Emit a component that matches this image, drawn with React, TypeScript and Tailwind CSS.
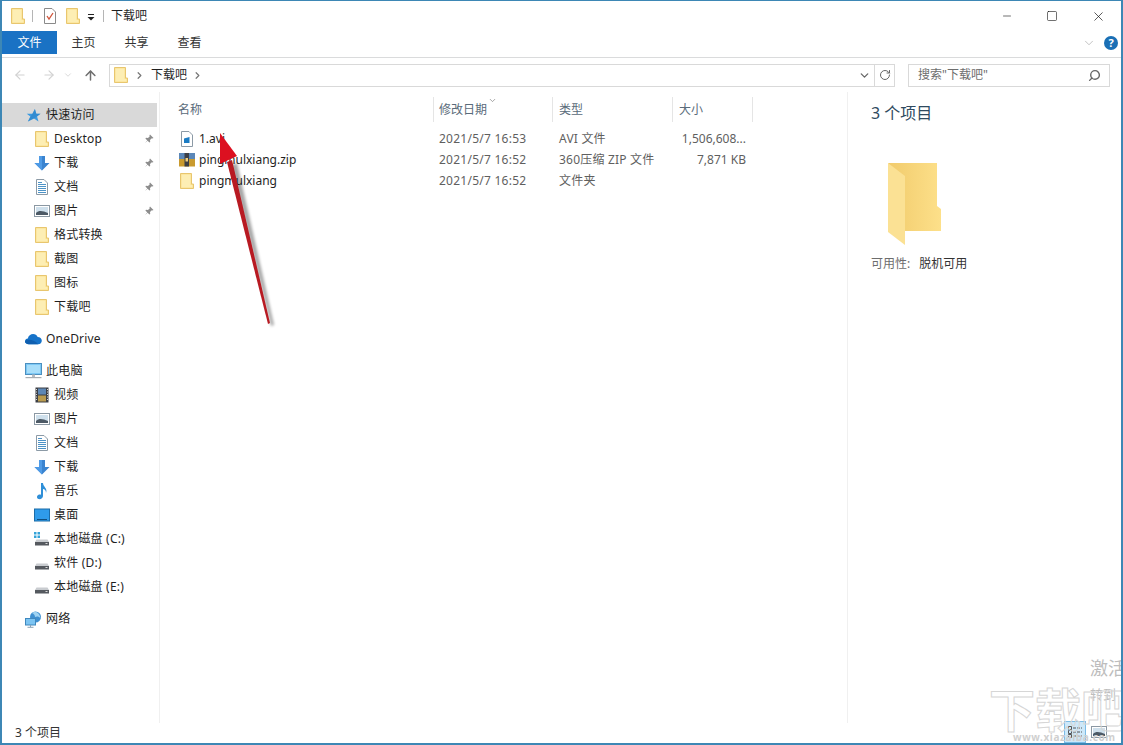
import { ReactNode } from 'react'
import { ArrowLeft, ArrowRight, ArrowUp, ChevronDown, ChevronRight, Minus, RotateCw, Search, Square, X } from 'lucide-react'

const Folder = ({ className = 'w-[14px] h-[16px]' }: { className?: string }) => (
  <svg viewBox="0 0 14 16" className={className}>
    <path d="M0.5 0.5H11.5V11H13.5V15.5H0.5Z" fill="#fbe08e" stroke="#e8c66f" strokeWidth="1" />
    <path d="M1.5 1.5H10.5V12H12.5V14.5H1.5Z" fill="#fdeeb4" />
  </svg>
)

const BlueDown = () => (
  <svg viewBox="0 0 16 16" className="w-4 h-4">
    <path d="M5 1H11V8H15.5L8 15.5L0.5 8H5Z" fill="#3b84d0" />
    <path d="M5 1H8V15.5L0.5 8H5Z" fill="#4f9be6" />
  </svg>
)

const Doc = () => (
  <svg viewBox="0 0 14 16" className="w-[14px] h-4">
    <path d="M1.5 0.5H9L12.5 4V15.5H1.5Z" fill="#fff" stroke="#8c9aa6" />
    <path d="M3 3.5H7M3 5.5H11M3 7.5H11M3 9.5H11M3 11.5H11M3 13.5H11" stroke="#4d93c7" />
  </svg>
)

const Pic = () => (
  <svg viewBox="0 0 16 14" className="w-4 h-[14px]">
    <rect x="0.5" y="1.5" width="15" height="11" fill="#fff" stroke="#8b98a3" />
    <rect x="2" y="3" width="12" height="8" fill="#cfe0ec" />
    <path d="M2 9C5 6 9 7 14 9V11H2Z" fill="#4d5a66" />
  </svg>
)

const Video = () => (
  <svg viewBox="0 0 14 16" className="w-[14px] h-4">
    <rect x="0.5" y="0.5" width="13" height="15" fill="#3c3f45" />
    <rect x="3" y="1.5" width="8" height="6" fill="#5d87b5" />
    <rect x="3" y="8.5" width="8" height="6" fill="#b99b4f" />
    <path d="M1.5 2V14M12.5 2V14" stroke="#d7d7d7" strokeDasharray="1 1.5" />
  </svg>
)

const Note = () => (
  <svg viewBox="0 0 14 18" className="w-[14px] h-[18px]">
    <path d="M6 1H8C8 5 13 6 11 11C11 8 9.5 7 8 7V14C8 16.5 5.5 17.5 3.5 17C1.5 16.5 1.5 13.5 3.5 12.7C4.5 12.3 5.3 12.4 6 12.8Z" fill="#2f8fd8" />
  </svg>
)

const Desk = () => (
  <svg viewBox="0 0 16 14" className="w-4 h-[14px]">
    <rect x="0.5" y="1" width="15" height="12" fill="#2f9bea" stroke="#1b6ca8" />
    <rect x="3" y="11" width="10" height="1" fill="#0f4f80" />
  </svg>
)

const Drive = ({ win = false }: { win?: boolean }) => (
  <svg viewBox="0 0 16 16" className="w-4 h-4">
    {win && <path d="M0 1H2.5V3.5H0ZM3.5 1H6V3.5H3.5ZM0 4.5H2.5V7H0ZM3.5 4.5H6V7H3.5Z" fill="#35a3d8" />}
    <path d="M2.5 8.5H13.5L15 11H1Z" fill="#c9ccd0" />
    <rect x="1" y="11" width="14" height="3.5" fill="#55595f" />
    <rect x="11.5" y="12" width="2" height="1" fill="#d8d8d8" />
  </svg>
)

const Star = () => (
  <svg viewBox="0 0 16 16" className="w-[15px] h-[15px]">
    <path d="M9.5 1L11 6H15.5L11.8 9L13.3 14.5L8.5 11.2L2 14.5L4.6 9L0.8 6.2H7Z" fill="#3b9ae0" />
    <path d="M9.5 1L11 6H15.5L8.5 11.2L2 14.5Z" fill="#2a7fc4" opacity="0.55" />
  </svg>
)

const Cloud = () => (
  <svg viewBox="0 0 18 12" className="w-[17px] h-3">
    <path d="M4 11.5C1.5 11.5 0 10 0 8.3C0 6.6 1.4 5.4 3 5.4C3.6 2.6 6 0.8 8.6 0.8C10.8 0.8 12.6 2 13.4 3.9C15.9 3.9 17.8 5.6 17.8 7.9C17.8 10 16.2 11.5 14 11.5Z" fill="#1673c9" />
    <path d="M4 11.5C1.5 11.5 0 10 0 8.3C2 6 9 6 14 11.5Z" fill="#0f5fb0" />
  </svg>
)

const Pc = () => (
  <svg viewBox="0 0 17 16" className="w-[17px] h-4">
    <rect x="0.5" y="0.5" width="16" height="11" fill="#7cc8f5" stroke="#4b8fbf" />
    <rect x="2" y="2" width="13" height="8" fill="#a8defa" />
    <rect x="0.5" y="14" width="16" height="1.2" fill="#a7adb3" />
    <rect x="7" y="11.5" width="3" height="2.5" fill="#b6bcc2" />
  </svg>
)

const Net = () => (
  <svg viewBox="0 0 17 17" className="w-[17px] h-[17px]">
    <circle cx="10.5" cy="6" r="5.5" fill="#3e8fd0" />
    <path d="M7 2C9 3 10 4 10 6C12 5 14 5.5 15.5 7C15 3 12 0.5 9.5 0.7Z" fill="#9fd3f2" />
    <rect x="0.5" y="7.5" width="10" height="6.5" fill="#7cc4f2" stroke="#3f88be" />
    <path d="M5.5 14V16M2.5 16.3H8.5" stroke="#8aa2b4" />
  </svg>
)

const Pin = () => (
  <svg viewBox="0 0 10 10" className="w-[10px] h-[10px]">
    <path d="M6 0.5L9.5 4L8.5 4.6L7.8 4.2L6 6L6.2 8L5.4 8.6L3.6 6.7L0.8 9.2L3.3 6.4L1.4 4.6L2 3.8L4 4L5.8 2.2L5.4 1.5Z" fill="#8d8d8d" />
  </svg>
)

const AviFile = () => (
  <svg viewBox="0 0 14 16" className="w-[14px] h-4">
    <path d="M1.5 0.5H9L12.5 4V15.5H1.5Z" fill="#fff" stroke="#8c9aa6" />
    <path d="M4 7.5L9.5 6V12H4Z" fill="#1b7cc4" />
  </svg>
)

const ZipFile = () => (
  <svg viewBox="0 0 16 15" className="w-4 h-[15px]">
    <rect x="0" y="1" width="16" height="6" fill="#5b87b8" />
    <rect x="0" y="7" width="16" height="7.5" fill="#c99a2e" />
    <rect x="5.5" y="1" width="4.5" height="13.5" fill="#3c3f46" />
    <rect x="6.5" y="6" width="2.5" height="3.5" fill="#f0d080" />
  </svg>
)

function NavItem({ icon, label, sub, pin, active }: { icon: ReactNode; label: string; sub?: boolean; pin?: boolean; active?: boolean }) {
  return (
    <div className={`h-6 flex items-center gap-1 ${sub ? 'pl-[31px]' : 'pl-[23px]'} ${active ? 'bg-[#d9d9d9]' : ''} mr-[2px]`}>
      <span className="w-[17px] flex justify-center items-center shrink-0">{icon}</span>
      <span className="flex-1 text-[#1f1f1f] tracking-[0.2px]">{label}</span>
      {pin && <span className="mr-[3px]"><Pin /></span>}
    </div>
  )
}

function Row({ icon, name, date, type, size }: { icon: ReactNode; name: string; date: string; type: string; size: string }) {
  return (
    <div className="grid grid-cols-[262px_119px_120px_80px] h-[21px] items-center text-[#5f5f5f]">
      <div className="flex items-center gap-1 pl-[6px] text-[#1f1f1f]">
        <span className="w-[17px] flex justify-center shrink-0">{icon}</span>
        {name}
      </div>
      <div className="pl-[5px] tracking-[0.25px]">{date}</div>
      <div className="pl-[6px] tracking-[0.2px]">{type}</div>
      <div className="pr-[7px] text-right">{size}</div>
    </div>
  )
}

export default function App() {
  return (
    <div className="relative w-[1123px] h-[745px] overflow-hidden bg-white flex flex-col border-x-2 border-t border-b-2 border-[#3d87b5] text-[12px] font-['Noto_Sans','Noto_Sans_CJK_SC',sans-serif]">
      {/* title bar */}
      <div className="h-[30px] flex items-center pl-[9px] shrink-0">
        <Folder />
        <div className="w-px h-3 bg-[#b5b5b5] ml-[7px]" />
        <svg viewBox="0 0 12 16" className="w-3 h-4 ml-[11px]">
          <path d="M0.5 0.5H8L11.5 4V15.5H0.5Z" fill="#fff" stroke="#8a8a8a" />
          <path d="M3 8L5 11L9 5" stroke="#d0543a" strokeWidth="1.3" fill="none" />
        </svg>
        <div className="ml-[10px]"><Folder /></div>
        <svg viewBox="0 0 8 7" className="w-2 h-[7px] ml-[7px] mt-[2px]">
          <rect x="1" y="0" width="6" height="1" fill="#222" />
          <path d="M0.5 3H7.5L4 6.5Z" fill="#222" />
        </svg>
        <div className="w-px h-3 bg-[#b5b5b5] ml-2" />
        <span className="ml-[7px] text-[#1f1f1f]">下载吧</span>
        <div className="ml-auto flex items-center text-[#111]">
          <span className="w-[45px] flex justify-center"><Minus size={12} strokeWidth={1.2} /></span>
          <span className="w-[46px] flex justify-center"><Square size={12} strokeWidth={1.2} /></span>
          <span className="w-[46px] flex justify-center pl-[1px]"><X size={15} strokeWidth={1.1} /></span>
        </div>
      </div>

      {/* ribbon */}
      <div className="h-[27px] flex items-start border-b border-[#dadbdc] shrink-0">
        <div className="w-[55px] h-[23px] bg-[#1a72c4] text-white flex items-center justify-center pt-[1px]">文件</div>
        <div className="w-[53px] h-[23px] flex items-center justify-center text-[#333] pt-[1px]">主页</div>
        <div className="w-[53px] h-[23px] flex items-center justify-center text-[#333] pt-[1px]">共享</div>
        <div className="w-[53px] h-[23px] flex items-center justify-center text-[#333] pt-[1px]">查看</div>
        <div className="ml-auto h-[23px] flex items-center gap-[8px] pr-[3px] pt-[1px]">
          <ChevronDown size={14} strokeWidth={1.2} className="text-[#a9a9a9]" />
          <span className="w-[14px] h-[14px] rounded-full bg-[#1a6fb5] text-white text-[11px] font-bold flex items-center justify-center">?</span>
        </div>
      </div>

      {/* address bar */}
      <div className="h-[34px] flex items-center shrink-0">
        <div className="w-[107px] flex items-center pl-[11px]">
          <ArrowLeft size={14} className="text-[#d2d2d2]" />
          <ArrowRight size={14} className="text-[#d2d2d2] ml-[15px]" />
          <ChevronDown size={10} className="text-[#d2d2d2] ml-[7px]" />
          <ArrowUp size={15} strokeWidth={2.4} className="text-[#6f6f6f] ml-[10px]" />
        </div>
        <div className="w-[786px] h-[23px] border border-[#d9d9d9] flex items-center pl-[4px]">
          <Folder />
          <ChevronRight size={11} strokeWidth={2.6} className="text-[#777] ml-[6px]" />
          <span className="ml-[6px] text-[#1f1f1f]">下载吧</span>
          <ChevronRight size={11} strokeWidth={2.6} className="text-[#777] ml-[5px]" />
          <ChevronDown size={13} strokeWidth={2.4} className="ml-auto mr-[3px] text-[#666]" />
          <div className="w-[20px] h-full border-l border-[#d9d9d9] flex items-center justify-center">
            <RotateCw size={12} strokeWidth={2} className="text-[#666]" />
          </div>
        </div>
        <div className="w-[202px] h-[23px] ml-[13px] border border-[#d9d9d9] flex items-center pl-[9px] pr-2 text-[#6d6d6d]">
          <span className="flex-1">搜索"下载吧"</span>
          <Search size={13} strokeWidth={2.6} className="text-[#666] -scale-x-100" />
        </div>
      </div>

      {/* body */}
      <div className="flex-1 flex min-h-0">
        <div className="w-[158px] shrink-0 pt-[11px] border-r border-[#f0f0f0] flex flex-col">
          <NavItem active icon={<Star />} label="快速访问" />
          <NavItem sub pin icon={<Folder />} label="Desktop" />
          <NavItem sub pin icon={<BlueDown />} label="下载" />
          <NavItem sub pin icon={<Doc />} label="文档" />
          <NavItem sub pin icon={<Pic />} label="图片" />
          <NavItem sub icon={<Folder />} label="格式转换" />
          <NavItem sub icon={<Folder />} label="截图" />
          <NavItem sub icon={<Folder />} label="图标" />
          <NavItem sub icon={<Folder />} label="下载吧" />
          <div className="mt-2"><NavItem icon={<Cloud />} label="OneDrive" /></div>
          <div className="mt-2"><NavItem icon={<Pc />} label="此电脑" /></div>
          <NavItem sub icon={<Video />} label="视频" />
          <NavItem sub icon={<Pic />} label="图片" />
          <NavItem sub icon={<Doc />} label="文档" />
          <NavItem sub icon={<BlueDown />} label="下载" />
          <NavItem sub icon={<Note />} label="音乐" />
          <NavItem sub icon={<Desk />} label="桌面" />
          <NavItem sub icon={<Drive win />} label="本地磁盘 (C:)" />
          <NavItem sub icon={<Drive />} label="软件 (D:)" />
          <NavItem sub icon={<Drive />} label="本地磁盘 (E:)" />
          <div className="mt-2"><NavItem icon={<Net />} label="网络" /></div>
        </div>

        <div className="flex-1 pl-[12px] pt-[5px]">
          <div className="grid grid-cols-[262px_119px_120px_80px] h-[25px] items-center text-[#5a6b7a]">
            <div className="pl-[6px] h-full flex items-center border-r border-[#e5e5e5]">名称</div>
            <div className="relative pl-[5px] h-full flex items-center border-r border-[#e5e5e5]">
              修改日期
              <ChevronDown size={9} className="absolute left-[54px] -top-[1px] text-[#888]" />
            </div>
            <div className="pl-[6px] h-full flex items-center border-r border-[#e5e5e5]">类型</div>
            <div className="pl-[6px] h-full flex items-center border-r border-[#e5e5e5]">大小</div>
          </div>
          <div className="mt-[6px]">
            <Row icon={<AviFile />} name="1.avi" date="2021/5/7 16:53" type="AVI 文件" size="1,506,608..." />
            <Row icon={<ZipFile />} name="pingmulxiang.zip" date="2021/5/7 16:52" type="360压缩 ZIP 文件" size="7,871 KB" />
            <Row icon={<Folder />} name="pingmulxiang" date="2021/5/7 16:52" type="文件夹" size="" />
          </div>
        </div>

        <div className="w-[274px] shrink-0 border-l border-[#f0f0f0] pl-[23px] pt-[10px]">
          <div className="text-[16px] leading-[22px] text-[#2f4a60]">3 个项目</div>
          <svg viewBox="0 0 58 82" className="w-[58px] h-[82px] ml-[16px] mt-[39px]">
            <defs>
              <linearGradient id="back" x1="0" x2="1" y1="0" y2="0">
                <stop offset="0" stopColor="#f1cb6c" />
                <stop offset="1" stopColor="#fde08a" />
              </linearGradient>
            </defs>
            <path d="M1 0H50V43L54 46V68H18V28Z" fill="url(#back)" />
            <path d="M1 0L18 13V82L1 69Z" fill="#fbe194" />
          </svg>
          <div className="mt-[10px] flex gap-[9px]">
            <span className="text-[#6d6d6d]">可用性:</span>
            <span className="text-[#333]">脱机可用</span>
          </div>
        </div>
      </div>

      {/* status bar */}
      <div className="h-[20px] shrink-0 flex items-center pl-[13px] text-[#333] relative">
        3 个项目
        <div className="ml-auto flex items-center h-[22px] -mt-[2px] mr-[9px]">
          <div className="w-[22px] h-[22px] bg-[#cde8f9] border border-[#7bbce6] flex items-center justify-center">
            <svg viewBox="0 0 14 12" className="w-[14px] h-3">
              <path d="M0.5 0.5H3.5V3.5H0.5ZM0.5 4.5H3.5V7.5H0.5ZM0.5 8.5H3.5V11.5H0.5Z" fill="none" stroke="#555" />
              <path d="M5 2H14M5 6H14M5 10H14" stroke="#555" strokeDasharray="3 1" />
            </svg>
          </div>
          <div className="w-[26px] flex justify-center"><Pic /></div>
        </div>
      </div>

      {/* watermark */}
      <div className="absolute left-[1088px] top-[655px] text-[18px] leading-[24px] text-[#bdbdbd] whitespace-nowrap">激活</div>
      <div className="absolute left-[1088px] top-[685px] text-[13px] leading-[16px] text-[#bdbdbd] whitespace-nowrap">转到</div>
      <div className="absolute left-[987px] top-[680px] text-[46px] leading-[56px] font-bold text-transparent whitespace-nowrap [-webkit-text-stroke:1px_#d6d6d6]">下载吧</div>
      <div className="absolute left-[1011px] top-[730px] text-[10px] leading-[12px] tracking-[0.6px] font-bold text-[#cfcfcf] whitespace-nowrap">www.xiazaiba.com</div>

      {/* annotation arrow */}
      <svg viewBox="0 0 80 220" className="absolute left-[204px] top-[123px] w-[80px] h-[220px] pointer-events-none">
        <path d="M65 200L28 38L22 40L62 201Z" fill="#000" opacity="0.35" transform="translate(3 1)" className="blur-[1.5px]" />
        <path d="M64 199L26 36L21 38L62 200Z" fill="#b81a22" />
        <path d="M14 9L14 40L31 32Z" fill="#dc1020" />
      </svg>
    </div>
  )
}
